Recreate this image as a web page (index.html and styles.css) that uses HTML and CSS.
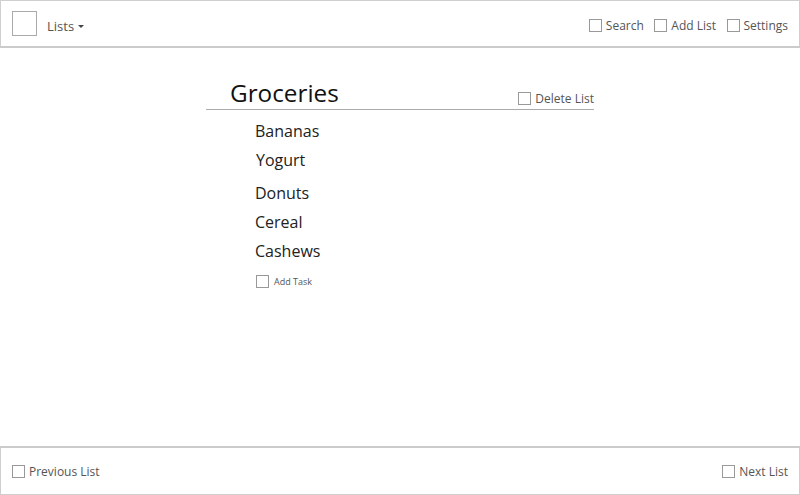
FILE: index.html
```html
<!DOCTYPE html>
<html>
<head>
<meta charset="utf-8">
<link rel="stylesheet" href="styles.css">
</head>
<body>
<div class="app">
  <header class="topbar">
    <div class="brand">
      <div class="logo"></div>
      <span class="menu">Lists <span class="caret"></span></span>
    </div>
    <nav class="actions">
      <span class="action"><span class="box"></span>Search</span>
      <span class="action"><span class="box"></span>Add List</span>
      <span class="action"><span class="box"></span>Settings</span>
    </nav>
  </header>
  <main class="main">
    <section class="list">
      <div class="list-head">
        <h1 class="title">Groceries</h1>
        <span class="action delete"><span class="box"></span>Delete List</span>
      </div>
      <ul class="tasks">
        <li class="task">Bananas</li>
        <li class="task shift">Yogurt</li>
        <li class="task gap">Donuts</li>
        <li class="task">Cereal</li>
        <li class="task">Cashews</li>
      </ul>
      <div class="add-task"><span class="box"></span>Add Task</div>
    </section>
  </main>
  <footer class="bottombar">
    <span class="action"><span class="box"></span>Previous List</span>
    <span class="action"><span class="box"></span>Next List</span>
  </footer>
</div>
</body>
</html>
```
FILE: styles.css
```css
* { box-sizing: border-box; }
html, body { margin: 0; padding: 0; }
body {
  font-family: "Open Sans", "Noto Sans", sans-serif;
  background: #fff;
  color: #222;
}
.app {
  width: 800px;
  height: 495px;
  display: flex;
  flex-direction: column;
}
.topbar {
  height: 48px;
  border: 1px solid #cfcfcf;
  border-bottom: 2px solid #cbcbcb;
  display: flex;
  align-items: center;
  justify-content: space-between;
  padding: 0 11px 0 11px;
}
.brand { display: flex; align-items: center; gap: 10px; }
.logo {
  width: 25px;
  height: 25px;
  border: 1.5px solid #aaa;
}
.menu {
  font-size: 13px;
  color: #555;
  display: flex;
  align-items: center;
  gap: 4px;
  padding-top: 4px;
}
.caret {
  width: 0; height: 0;
  border-left: 3px solid transparent;
  border-right: 3px solid transparent;
  border-top: 3px solid #444;
  margin-top: 1px;
}
.actions { display: flex; align-items: center; gap: 10.5px; padding-top: 4px; }
.action {
  display: inline-flex;
  align-items: center;
  gap: 4px;
  font-size: 12px;
  color: #555;
}
.box {
  width: 13px;
  height: 13px;
  border: 1px solid #999;
  background: #fff;
  flex: none;
}
.main {
  flex: 1;
  padding-top: 29px;
}
.list {
  width: 388px;
  margin: 0 auto;
}
.list-head {
  display: flex;
  justify-content: space-between;
  align-items: flex-end;
  border-bottom: 1.5px solid #aaa;
  padding-left: 24px;
}
.title {
  margin: 0;
  font-size: 24.3px;
  font-weight: 400;
  line-height: 32px;
  color: #111;
}
.delete { padding-bottom: 2px; }
.tasks {
  list-style: none;
  margin: 7px 0 0 0;
  padding: 0 0 0 49px;
}
.task {
  font-size: 16px;
  line-height: 29px;
  color: #222;
}
.task.shift { padding-left: 1px; }
.task.gap { margin-top: 4px; }
.add-task {
  display: flex;
  align-items: center;
  gap: 5px;
  margin: 9px 0 0 50px;
  font-size: 9px;
  color: #555;
}
.bottombar {
  height: 49px;
  border: 1px solid #cfcfcf;
  border-top: 2px solid #cbcbcb;
  display: flex;
  align-items: center;
  justify-content: space-between;
  padding: 0 11px;
}
```
